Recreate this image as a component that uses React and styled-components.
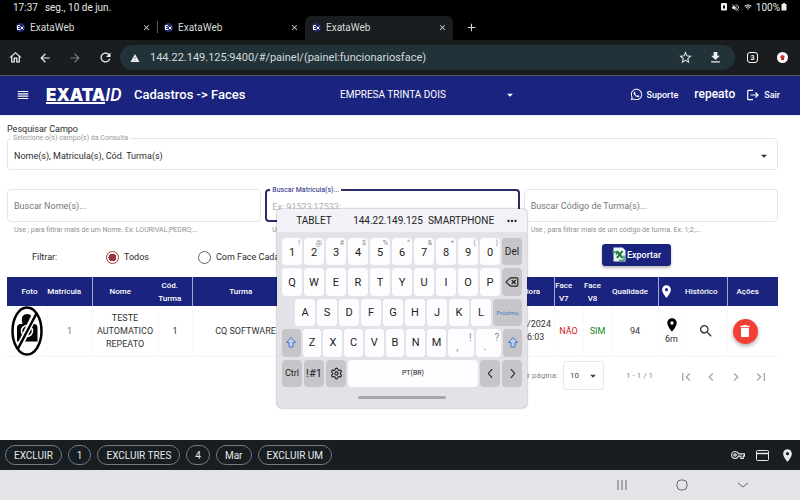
import React from "react";
import styled, { createGlobalStyle, css } from "styled-components";
import {
  MdOutlineHome, MdArrowBack, MdArrowForward, MdRefresh, MdStarBorder, MdFileDownload,
  MdClose, MdAdd, MdReorder, MdLogout, MdArrowDropDown, MdLocationOn, MdSearch, MdDelete,
  MdFirstPage, MdLastPage, MdChevronLeft, MdChevronRight,
  MdOutlineVpnKey, MdMoreHoriz, MdVolumeOff, MdWifi,
} from "react-icons/md";
import { FaWhatsapp } from "react-icons/fa";
import { Delete, Settings } from "lucide-react";

const navy = "#1a237e";

const GlobalStyle = createGlobalStyle`
  * { box-sizing: border-box; }
  body { margin: 0; font-family: Roboto, "Liberation Sans", sans-serif; font-size: 9px; color: #2b2b2b; background: #fff; }
  button, input, select { font: inherit; color: inherit; margin: 0; }
  button { border: 0; padding: 0; background: none; display: inline-flex; align-items: center; justify-content: center; }
  a { color: inherit; text-decoration: none; }
  svg { display: block; flex: none; }
`;

const Screen = styled.div`
  position: relative;
  min-height: 100vh;
  display: flex;
  flex-direction: column;
`;

/* System status and browser tabs */
const StatusBar = styled.div`
  height: 16px;
  padding: 0 13px 2px;
  display: flex;
  align-items: center;
  gap: 7px;
  background: #000;
  color: #e8e8e8;
  font-size: 10px;
`;
const StatusIcons = styled.div`
  margin-left: auto;
  display: flex;
  align-items: center;
  gap: 4px;
`;
const Battery = styled.span`
  display: flex;
  align-items: center;
  gap: 1px;
`;
const TabStrip = styled.nav`
  height: 24px;
  padding-left: 9px;
  display: flex;
  background: #000;
  color: #d8dadb;
`;
const Tab = styled.div`
  flex: 0 1 148px;
  display: flex;
  align-items: center;
  gap: 5px;
  padding: 0 6px 2px 7px;
  font-size: 10px;
  border-radius: 6px 6px 0 0;
  background: ${(p) => (p.$active ? "#1a1d20" : "transparent")};
  button { margin-left: auto; }
`;
const TabDivider = styled.span`
  width: 1px;
  height: 12px;
  margin: 5px -1px 0 0;
  background: #55585b;
`;
const NewTab = styled.button`
  width: 37px;
  height: 22px;
`;
const BrowserBar = styled.div`
  height: 36px;
  display: flex;
  align-items: center;
  background: #1a1d20;
  border-bottom: 1px solid #54585a;
  color: #eceeee;
`;
const BrowserButton = styled.button`
  width: 30px;
  height: 30px;
  opacity: ${(p) => (p.disabled ? 0.45 : 1)};
`;
const AddressBar = styled.div`
  flex: 1;
  height: 25px;
  padding: 0 5px 0 10px;
  display: flex;
  align-items: center;
  gap: 10px;
  border-radius: 13px;
  background: #213238;
`;
const AddressInput = styled.input`
  flex: 1;
  min-width: 0;
  border: 0;
  padding: 0;
  outline: 0;
  background: none;
  color: #d5dbdd;
  font-size: 11px;
`;
const TabCount = styled.button`
  width: 11px;
  height: 11px;
  margin: 0 19px 0 12px;
  border: 1px solid #fff;
  border-radius: 3px;
  font-size: 7px;
  font-weight: 700;
`;
const UpdateButton = styled.button`
  width: 11px;
  height: 11px;
  margin-right: 12px;
  border-radius: 50%;
  background: #fff;
`;

/* Application header */
const Header = styled.header`
  height: 39px;
  padding: 0 20px 2px 16px;
  display: flex;
  align-items: center;
  background: ${navy};
  color: #fff;
`;
const Logo = styled.span`
  display: flex;
  align-items: flex-start;
  width: 88px;
  margin: 2px 0 0 16px;
  line-height: 14px;
  font-size: 18px;
  font-style: italic;
  font-weight: 500;
`;
const LogoName = styled.span`
  font-family: Inter, sans-serif;
  font-size: 17px;
  font-style: normal;
  font-weight: 900;
  border-bottom: 2px solid #fff;
`;
const Title = styled.h1`
  width: 206px;
  margin: 0;
  font-size: 13px;
  font-weight: 500;
`;
const SelectWrap = styled.div`
  display: flex;
  align-items: center;
  width: ${(p) => p.$width || "auto"};
  select {
    flex: 1;
    min-width: 0;
    appearance: none;
    border: 0;
    padding: 0;
    outline: 0;
    background: transparent;
  }
  svg { pointer-events: none; margin-left: -14px; }
`;
const CompanySelect = styled(SelectWrap)`
  font-size: 10px;
`;
const HeaderActions = styled.div`
  margin-left: auto;
  display: flex;
  align-items: center;
  font-weight: 500;
`;
const HeaderLink = styled.a`
  display: flex;
  align-items: center;
  gap: 4px;
`;
const UserName = styled.span`
  margin: 0 11px 2px 16px;
  font-size: 12px;
`;

/* Search form */
const Main = styled.main`
  flex: 1;
  padding: 7px 22px 0 7px;
  border-top: 1px solid #e8edfb;
`;
const SectionLabel = styled.div`
  height: 15px;
  line-height: 13px;
`;
const Field = styled.div`
  position: relative;
  min-width: 0;
  height: ${(p) => (p.$select ? "32px" : "33px")};
  padding: ${(p) => (p.$focused ? "2px 5px 0" : p.$select ? "3px 6px 0" : "0 6px")};
  display: flex;
  align-items: center;
  border: ${(p) => (p.$focused ? "2px solid #292b68" : "1px solid #e6e6e8")};
  border-radius: 4px;
  input {
    width: 100%;
    border: 0;
    padding: 0;
    outline: 0;
    background: none;
  }
  input::placeholder { color: ${(p) => (p.$focused ? "#b0b0b0" : "#777")}; opacity: 1; }
`;
const FloatingLabel = styled.label`
  position: absolute;
  top: -5px;
  left: 3px;
  padding: 0 2px;
  background: #fff;
  color: ${(p) => (p.$focused ? navy : "#999")};
  font-size: 7px;
  line-height: 8px;
`;
const FieldGrid = styled.div`
  margin-top: 19px;
  display: grid;
  grid-template-columns: repeat(3, 1fr);
  gap: 4px;
`;
const Hint = styled.div`
  padding: 4px 7px 0;
  color: #909090;
  font-size: 7px;
  line-height: 8px;
`;
const FilterRow = styled.div`
  height: 43px;
  padding: 3px 107px 0 25px;
  display: flex;
  align-items: center;
`;
const FilterTitle = styled.span`
  width: 74px;
`;
const RadioLabel = styled.label`
  width: 92px;
  display: flex;
  align-items: center;
  gap: 5px;
  white-space: nowrap;
`;
const Radio = styled.input`
  appearance: none;
  flex: none;
  width: 13px;
  height: 13px;
  border: 1px solid #606060;
  border-radius: 50%;
  &:checked {
    border-color: #96373c;
    background: radial-gradient(circle, #96373c 0 4px, #fff 4px);
  }
`;
const ExportButton = styled.button`
  width: 69px;
  height: 22px;
  margin: -5px 0 0 auto;
  gap: 1px;
  border-radius: 3px;
  background: ${navy};
  color: #fff;
  font-weight: 500;
  box-shadow: 0 2px 3px #0004;
`;

/* Results */
const Table = styled.table`
  width: 100%;
  table-layout: fixed;
  border-collapse: collapse;
  line-height: 13px;
  text-align: center;
`;
const Col = styled.col`
  width: ${(p) => p.$width};
`;
const HeadCell = styled.th`
  height: 29px;
  padding: 0 10px 0 0;
  border-right: ${(p) => (p.$line ? "1px solid #a5a8cf" : "0")};
  background: ${navy};
  color: #fff;
  font-size: 8px;
  font-weight: 500;
  &:first-child { padding: 0 0 0 5px; }
  svg { margin: auto; }
`;
const Cell = styled.td`
  height: 50px;
  padding: ${(p) => (p.$last ? "0 15px 0 0" : "0")};
  border-bottom: 1px solid #f4f4f4;
  border-right: ${(p) => (p.$last ? "0" : "1px solid #f9f9f9")};
  color: ${(p) => p.$color || "#333"};
  svg { margin: auto; }
`;
const DeleteButton = styled.button`
  width: 25px;
  height: 25px;
  border-radius: 50%;
  background: #f43f36;
  color: #fff;
  box-shadow: 0 2px 4px #0005;
`;
const Paginator = styled.div`
  padding: 4px 5px 0 0;
  display: flex;
  align-items: center;
  justify-content: flex-end;
  color: #888;
  font-size: 8px;
`;
const PageSize = styled(SelectWrap)`
  height: 29px;
  margin: 0 22px 0 5px;
  padding: 0 3px 0 6px;
  border: 1px solid #e8e8e8;
  border-radius: 3px;
  color: #444;
`;
const PageButton = styled.button`
  width: 25px;
  height: 24px;
  padding-top: 3px;
  color: #a8a8a8;
`;
const PageRange = styled.span`
  margin-right: 20px;
`;

/* Floating keyboard */
const Keyboard = styled.section`
  position: absolute;
  top: 209px;
  left: 277px;
  width: 250px;
  overflow: hidden;
  border-radius: 5px;
  background: #e3e2e8;
  box-shadow: 0 0 2px #0008;
  color: #222;
`;
const Suggestions = styled.div`
  height: 23px;
  display: grid;
  grid-template-columns: 74px 74px 72px 1fr;
  background: #f3f2f8;
  font-size: 10px;
`;
const KeyRows = styled.div`
  height: 161px;
  padding: 6px 5px;
  display: grid;
  grid-template-rows: repeat(5, 1fr);
  gap: 3px;
`;
const KeyRow = styled.div`
  display: flex;
  gap: 2px;
  padding-left: ${(p) => (p.$indent ? "13px" : "0")};
`;
const Key = styled.button`
  position: relative;
  flex: ${(p) => p.$span || 1} 1 0;
  min-width: 0;
  padding-top: ${(p) => (p.$digit ? "2px" : "0")};
  border-radius: 4px;
  background: ${(p) => (p.$dark ? "#c6c6ca" : "#fdfdff")};
  color: ${(p) => (p.$accent ? "#4878c4" : "#222")};
  font-size: ${(p) => p.$size || "11px"};
  ${(p) => p.$pale && css`color: #888; padding: 8px 7px 0 0;`}
`;
const KeyHint = styled.span`
  position: absolute;
  top: ${(p) => (p.$large ? "4px" : "1px")};
  right: 2px;
  color: #888;
  font-size: ${(p) => (p.$large ? "10px" : "7px")};
  line-height: 9px;
`;
const DragBar = styled.div`
  width: 88px;
  height: 3px;
  margin: 3px auto 9px;
  border-radius: 2px;
  background: #a7a6ab;
`;

/* Autofill chips and system navigation */
const AutofillBar = styled.div`
  height: 30px;
  padding: 0 5px;
  display: flex;
  align-items: center;
  gap: 6px;
  background: #171d20;
  color: #e6e8e9;
`;
const Chip = styled.button`
  height: 20px;
  padding: 0 8px;
  border: 1px solid #747a80;
  border-radius: 10px;
  font-size: 10px;
`;
const AutofillIcons = styled.div`
  margin-left: auto;
  display: flex;
  align-items: center;
  gap: 11px;
`;
const SystemNav = styled.nav`
  height: 30px;
  padding-right: 50px;
  display: flex;
  justify-content: flex-end;
  align-items: center;
  gap: 47px;
  background: #e4e3e8;
  color: #66666c;
`;

const Favicon = () => (
  <svg width="9" height="9" viewBox="0 0 18 18">
    <circle cx="9" cy="9" r="9" fill="#25286f" />
    <path d="M8 5H3v8h5M3 9h4M9 7l6 6m0-6-6 6" fill="none" stroke="#fff" strokeWidth="2" />
  </svg>
);
const WarningIcon = () => (
  <svg width="10" height="10" viewBox="0 0 20 20">
    <path d="M10 2 19 18H1Z" fill="#eceeee" />
    <path d="M10 8v4m0 2v2" stroke="#63747a" strokeWidth="1.5" />
  </svg>
);
const SheetIcon = () => (
  <svg width="14" height="15" viewBox="0 0 28 30">
    <path d="M3 1h18l6 6v22H3Z" fill="#e7f5ec" />
    <path d="M24 17v10H14" fill="none" stroke="#39975a" strokeWidth="3" />
    <path d="M0 10h9v6" fill="none" stroke="#279553" strokeWidth="3" />
    <path d="m10 8 11 14m0-14L10 22" stroke="#167236" strokeWidth="4" />
  </svg>
);
const NoPhoto = () => (
  <svg width="32" height="50" viewBox="0 0 64 100" role="img" aria-label="Sem foto">
    <path d="M12 43q0-7 8-7h3q-5-20 9-20 12 0 9 13l-3 7h8q7 0 7 7v28H12Z" fill="#000" />
    <circle cx="32" cy="50" r="11" fill="none" stroke="#fff" strokeWidth="3" />
    <circle cx="32" cy="50" r="4" fill="#fff" />
    <path d="M50 13 14 87" stroke="#fff" strokeWidth="12" />
    <path d="M52 13 13 87" stroke="#000" strokeWidth="5" />
    <ellipse cx="32" cy="50" rx="29" ry="47" fill="none" stroke="#000" strokeWidth="5" />
  </svg>
);
const ShiftIcon = () => (
  <svg width="12" height="13" viewBox="0 0 24 26">
    <path d="m12 3 9 10h-5v9H8v-9H3Z" fill="#b8d0f4" stroke="#4878c4" strokeWidth="2" strokeLinejoin="round" />
  </svg>
);
const Chevron = ({ d }) => (
  <svg width="13" height="13" viewBox="0 0 24 24">
    <path d={d} fill="none" stroke="currentColor" strokeWidth="2" />
  </svg>
);

const hints = ["!", "@", "#", "$", "%", "^", "&", "*", "(", ")"];
const columns = [
  ["Foto", "40px"], ["Matrícula", "45px", true], ["Nome", "66px"], ["Cód. Turma", "34px", true],
  ["Turma", "107px"], ["", "auto"], ["Data/Hora", "54px", true], ["Face V7", "29px"],
  ["Face V8", "29px"], ["Qualidade", "46px", true], ["pin", "27px"], ["Histórico", "42px", true],
  ["Ações", "51px"],
];

export default function App() {
  return (
    <Screen>
      <GlobalStyle />
      <StatusBar>
        <span>17:37</span>
        <span>seg., 10 de jun.</span>
        <StatusIcons>
          <svg width="6" height="8" viewBox="0 0 12 16"><rect width="12" height="15" rx="2" fill="#eee" /><path d="M4 5h4v6H4Z" fill="#111" /></svg>
          <MdVolumeOff size={9} />
          <MdWifi size={8} />
          <Battery>100%<svg width="6" height="8" viewBox="0 0 12 16"><path d="M4 0h4v2h3v13H1V2h3Z" fill="#eee" /></svg></Battery>
        </StatusIcons>
      </StatusBar>
      <TabStrip>
        {[0, 1, 2].map((i) => (
          <React.Fragment key={i}>
            <Tab $active={i === 2}>
              <Favicon />
              ExataWeb
              <button aria-label="Fechar guia"><MdClose size={9} /></button>
            </Tab>
            {i === 0 && <TabDivider />}
          </React.Fragment>
        ))}
        <NewTab aria-label="Nova guia"><MdAdd size={13} /></NewTab>
      </TabStrip>
      <BrowserBar>
        <BrowserButton aria-label="Início"><MdOutlineHome size={15} /></BrowserButton>
        <BrowserButton aria-label="Voltar"><MdArrowBack size={14} /></BrowserButton>
        <BrowserButton aria-label="Avançar" disabled><MdArrowForward size={14} /></BrowserButton>
        <BrowserButton aria-label="Recarregar"><MdRefresh size={15} /></BrowserButton>
        <AddressBar>
          <WarningIcon />
          <AddressInput aria-label="Endereço" defaultValue="144.22.149.125:9400/#/painel/(painel:funcionariosface)" />
          <div>
            <BrowserButton aria-label="Favoritar"><MdStarBorder size={15} /></BrowserButton>
            <BrowserButton aria-label="Baixar"><MdFileDownload size={15} /></BrowserButton>
          </div>
        </AddressBar>
        <TabCount>3</TabCount>
        <UpdateButton aria-label="Atualizar">
          <svg width="7" height="7" viewBox="0 0 14 14"><path d="m7 1 6 6h-3v5H4V7H1Z" fill="#c92c2c" /></svg>
        </UpdateButton>
      </BrowserBar>

      <Header>
        <button aria-label="Menu"><MdReorder size={14} /></button>
        <Logo><LogoName>EXATA</LogoName>ID</Logo>
        <Title>Cadastros -&gt; Faces</Title>
        <CompanySelect $width="177px">
          <select aria-label="Empresa"><option>EMPRESA TRINTA DOIS</option></select>
          <MdArrowDropDown size={14} />
        </CompanySelect>
        <HeaderActions>
          <HeaderLink href="#suporte"><FaWhatsapp size={13} />Suporte</HeaderLink>
          <UserName>repeato</UserName>
          <HeaderLink href="#sair"><MdLogout size={14} />Sair</HeaderLink>
        </HeaderActions>
      </Header>

      <Main>
        <SectionLabel>Pesquisar Campo</SectionLabel>
        <Field $select>
          <FloatingLabel htmlFor="campos">Selecione o(s) campo(s) da Consulta</FloatingLabel>
          <SelectWrap $width="100%">
            <select id="campos"><option>Nome(s), Matricula(s), Cód. Turma(s)</option></select>
            <MdArrowDropDown size={14} />
          </SelectWrap>
        </Field>
        <FieldGrid>
          <div>
            <Field><input aria-label="Buscar Nome(s)..." placeholder="Buscar Nome(s)..." /></Field>
            <Hint>Use ; para filtrar mais de um Nome. Ex: LOURIVAL;PEDRO;...</Hint>
          </div>
          <div>
            <Field $focused>
              <FloatingLabel htmlFor="matricula" $focused>Buscar Matrícula(s)...</FloatingLabel>
              <input id="matricula" placeholder="Ex: 91523;17533;" />
            </Field>
            <Hint>Use ;</Hint>
          </div>
          <div>
            <Field><input aria-label="Buscar Código de Turma(s)..." placeholder="Buscar Código de Turma(s)..." /></Field>
            <Hint>Use ; para filtrar mais de um código de turma. Ex: 1;2;...</Hint>
          </div>
        </FieldGrid>
        <FilterRow>
          <FilterTitle>Filtrar:</FilterTitle>
          <RadioLabel><Radio type="radio" name="filtro" defaultChecked />Todos</RadioLabel>
          <RadioLabel><Radio type="radio" name="filtro" />Com Face Cada</RadioLabel>
          <ExportButton><SheetIcon />Exportar</ExportButton>
        </FilterRow>
        <Table>
          <colgroup>{columns.map(([n, w]) => <Col key={n} $width={w} />)}</colgroup>
          <thead>
            <tr>
              {columns.map(([n, , line]) => (
                <HeadCell key={n} $line={line} aria-label={n === "pin" ? "Localização" : undefined}>
                  {n === "pin" ? <MdLocationOn size={15} /> : n}
                </HeadCell>
              ))}
            </tr>
          </thead>
          <tbody>
            <tr>
              <Cell><NoPhoto /></Cell>
              <Cell $color="#777">1</Cell>
              <Cell>TESTE AUTOMATICO REPEATO</Cell>
              <Cell>1</Cell>
              <Cell>CQ SOFTWARE</Cell>
              <Cell />
              <Cell>10/06/2024 17:36:03</Cell>
              <Cell $color="#d0201c">NÃO</Cell>
              <Cell $color="#13841c">SIM</Cell>
              <Cell>94</Cell>
              <Cell><MdLocationOn size={16} color="#000" />6m</Cell>
              <Cell><MdSearch size={16} /></Cell>
              <Cell $last><DeleteButton aria-label="Excluir"><MdDelete size={16} /></DeleteButton></Cell>
            </tr>
          </tbody>
        </Table>
        <Paginator>
          <label htmlFor="itens">Itens por página:</label>
          <PageSize $width="41px">
            <select id="itens"><option>10</option></select>
            <MdArrowDropDown size={14} />
          </PageSize>
          <PageRange>1 - 1 / 1</PageRange>
          <PageButton aria-label="Primeira página"><MdFirstPage size={16} /></PageButton>
          <PageButton aria-label="Página anterior"><MdChevronLeft size={16} /></PageButton>
          <PageButton aria-label="Próxima página"><MdChevronRight size={16} /></PageButton>
          <PageButton aria-label="Última página"><MdLastPage size={16} /></PageButton>
        </Paginator>
      </Main>

      <AutofillBar>
        {["EXCLUIR", "1", "EXCLUIR TRES", "4", "Mar", "EXCLUIR UM"].map((t) => <Chip key={t}>{t}</Chip>)}
        <AutofillIcons>
          <button aria-label="Senhas"><MdOutlineVpnKey size={14} /></button>
          <button aria-label="Cartões">
            <svg width="13" height="11" viewBox="0 0 26 22"><rect x="1" y="1" width="24" height="20" rx="2" fill="none" stroke="currentColor" strokeWidth="2" /><path d="M1 7h24" stroke="currentColor" strokeWidth="3" /></svg>
          </button>
          <button aria-label="Endereços"><MdLocationOn size={15} /></button>
        </AutofillIcons>
      </AutofillBar>
      <SystemNav>
        <button aria-label="Recentes"><svg width="12" height="12" viewBox="0 0 12 12"><path d="M2 1v10m4-10v10m4-10v10" stroke="currentColor" /></svg></button>
        <button aria-label="Tela inicial"><svg width="14" height="12" viewBox="0 0 14 12"><rect x="2" y="1" width="10" height="10" rx="4" fill="none" stroke="currentColor" /></svg></button>
        <button aria-label="Ocultar teclado"><svg width="14" height="12" viewBox="0 0 14 12"><path d="m2 4 5 4 5-4" fill="none" stroke="currentColor" /></svg></button>
      </SystemNav>

      <Keyboard aria-label="Teclado">
        <Suggestions>
          <button>TABLET</button>
          <button>144.22.149.125</button>
          <button>SMARTPHONE</button>
          <button aria-label="Mais"><MdMoreHoriz size={14} /></button>
        </Suggestions>
        <KeyRows>
          <KeyRow>
            {[..."1234567890"].map((k, i) => <Key key={k} $digit>{k}<KeyHint>{hints[i]}</KeyHint></Key>)}
            <Key $dark $size="10px">Del</Key>
          </KeyRow>
          <KeyRow>
            {[..."QWERTYUIOP"].map((k) => <Key key={k}>{k}</Key>)}
            <Key $dark aria-label="Apagar"><Delete size={14} /></Key>
          </KeyRow>
          <KeyRow $indent>
            {[..."ASDFGHJKL"].map((k) => <Key key={k}>{k}</Key>)}
            <Key $dark $accent $span={1.45} $size="6px">Próximo</Key>
          </KeyRow>
          <KeyRow>
            <Key $dark aria-label="Maiúsculas"><ShiftIcon /></Key>
            {[..."ZXCVBNM"].map((k) => <Key key={k}>{k}</Key>)}
            <Key $pale>,<KeyHint $large>!</KeyHint></Key>
            <Key $pale>.<KeyHint $large>?</KeyHint></Key>
            <Key $dark aria-label="Maiúsculas"><ShiftIcon /></Key>
          </KeyRow>
          <KeyRow>
            <Key $dark $size="9px">Ctrl</Key>
            <Key $dark>!#1</Key>
            <Key $dark aria-label="Configurações"><Settings size={13} /></Key>
            <Key $span={6.5} $size="7px">PT(BR)</Key>
            <Key $dark aria-label="Esquerda"><Chevron d="M15 4 8 12l7 8" /></Key>
            <Key $dark aria-label="Direita"><Chevron d="m9 4 7 8-7 8" /></Key>
          </KeyRow>
        </KeyRows>
        <DragBar />
      </Keyboard>
    </Screen>
  );
}
